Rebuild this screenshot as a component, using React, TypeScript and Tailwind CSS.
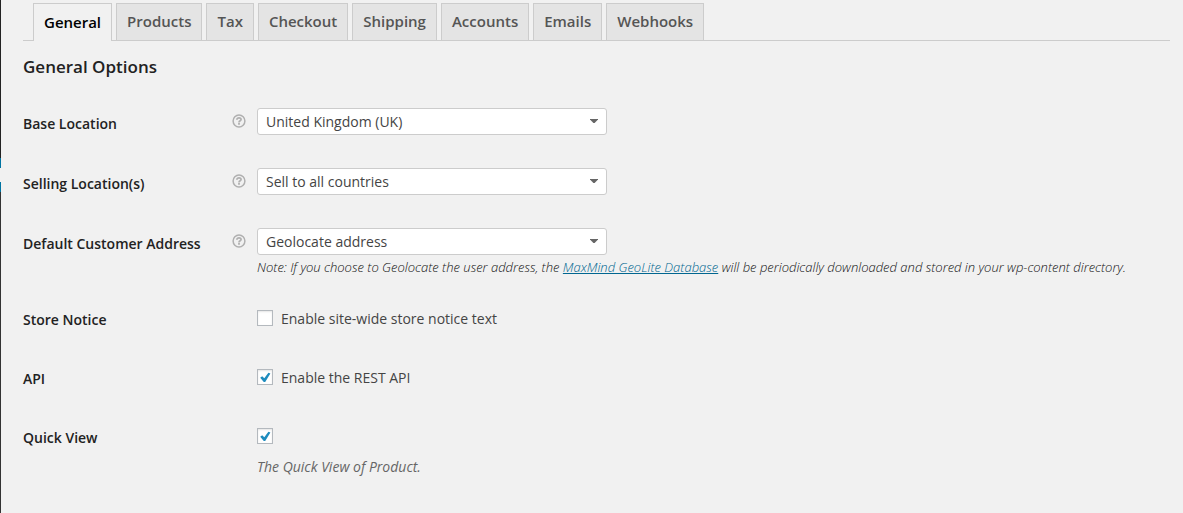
import { ReactNode, useState } from "react";

const tabs = ["General", "Products", "Tax", "Checkout", "Shipping", "Accounts", "Emails", "Webhooks"];

function HelpIcon() {
  return (
    <svg viewBox="0 0 14 14" className="h-3.5 w-3.5" fill="none" stroke="#b0b0b0" aria-hidden="true">
      <circle cx="7" cy="7" r="5.9" strokeWidth="1.5" />
      <path d="M4.9 5.7C4.9 4.5 5.8 3.9 7 3.9s2.1.6 2.1 1.7C9.1 6.9 7 6.8 7 8.4" strokeWidth="1.7" />
      <path d="M7 9.1v1.7" strokeWidth="1.8" />
    </svg>
  );
}

function Row({ id, label, help, children }: { id: string; label: string; help?: boolean; children: ReactNode }) {
  return (
    <div className="grid grid-cols-[209px_25px_1fr] py-[15px]">
      <label htmlFor={id} className="pt-[5px] leading-[22px] font-semibold text-[#222222]">
        {label}
      </label>
      <span className="pt-[6px]">{help && <HelpIcon />}</span>
      <div>{children}</div>
    </div>
  );
}

function Select({ id, options }: { id: string; options: string[] }) {
  return (
    <div className="mb-[3px] grid w-[350px] max-w-full items-center">
      <select
        id={id}
        className="col-start-1 row-start-1 h-[27px] appearance-none rounded-[3px] border border-[#cccccc] bg-white px-2 text-sm text-[#444444]"
      >
        {options.map((o) => (
          <option key={o}>{o}</option>
        ))}
      </select>
      <svg
        viewBox="0 0 8 5"
        className="pointer-events-none col-start-1 row-start-1 mr-[9px] h-[5px] w-2 justify-self-end"
        fill="#666666"
        aria-hidden="true"
      >
        <path d="M0 0h8v.6L4.6 4H3.4L0 .6z" />
      </svg>
    </div>
  );
}

function Checkbox({ id, initial, text }: { id: string; initial: boolean; text?: string }) {
  const [on, setOn] = useState(initial);
  return (
    <div className="mb-0.5 flex h-[27px] items-center gap-2">
      <span className="grid">
        <input
          id={id}
          type="checkbox"
          checked={on}
          onChange={() => setOn(!on)}
          className="col-start-1 row-start-1 h-4 w-4 appearance-none border border-[#b4b9be] bg-white shadow-[inset_0_1px_2px_rgba(0,0,0,0.1)]"
        />
        {on && (
          <svg
            viewBox="0 0 16 16"
            className="pointer-events-none col-start-1 row-start-1 h-4 w-4"
            fill="#1e8cbe"
            aria-hidden="true"
          >
            <path d="M3.2 8.8 5.2 7.3 7.3 9.3 11.4 3.8 13.4 4.6 8.2 13H6.8z" />
          </svg>
        )}
      </span>
      {text && (
        <label htmlFor={id} className="pt-0.5">
          {text}
        </label>
      )}
    </div>
  );
}

export default function App() {
  const [active, setActive] = useState("General");
  return (
    <div className="flex min-h-screen bg-[#f1f1f1] font-['Open_Sans',sans-serif] text-sm text-[#444444]">
      <div className="flex w-px shrink-0 flex-col" aria-hidden="true">
        <div className="h-[158px] bg-[#222222]" />
        <div className="h-[10px] bg-[#0074a2]" />
        <div className="h-[14px]" />
        <div className="h-[10px] bg-[#0074a2]" />
        <div className="grow bg-[#333333]" />
      </div>
      <main className="min-w-0 grow pr-[13px] pl-[22px]">
        <nav className="flex gap-1 border-b border-[#cccccc] px-2.5 pt-[3px]">
          {tabs.map((t) => (
            <button
              key={t}
              type="button"
              onClick={() => setActive(t)}
              className={
                t === active
                  ? "-mb-px h-[38px] border border-b-0 border-[#cccccc] bg-[#f1f1f1] px-2.5 text-[15px] font-semibold text-black"
                  : "h-[37px] border border-b-0 border-[#cccccc] bg-[#e4e4e4] px-2.5 text-[15px] font-semibold text-[#555555]"
              }
            >
              {t}
            </button>
          ))}
        </nav>
        <h3 className="pt-[14px] pb-[14px] text-[17px] leading-6 font-semibold text-[#222222]">General Options</h3>
        <form>
          <Row id="base" label="Base Location" help>
            <Select id="base" options={["United Kingdom (UK)"]} />
          </Row>
          <Row id="selling" label="Selling Location(s)" help>
            <Select id="selling" options={["Sell to all countries"]} />
          </Row>
          <Row id="address" label="Default Customer Address" help>
            <Select id="address" options={["Geolocate address"]} />
            <p className="-mb-0.5 text-[13px] leading-[18px] font-light italic text-[#111111]">
              Note: If you choose to Geolocate the user address, the{" "}
              <a href="#maxmind" className="text-[#006690] underline">
                MaxMind GeoLite Database
              </a>{" "}
              will be periodically downloaded and stored in your wp-content directory.
            </p>
          </Row>
          <Row id="notice" label="Store Notice">
            <Checkbox id="notice" initial={false} text="Enable site-wide store notice text" />
          </Row>
          <Row id="api" label="API">
            <Checkbox id="api" initial text="Enable the REST API" />
          </Row>
          <Row id="quick" label="Quick View">
            <Checkbox id="quick" initial />
            <p className="pt-[5px] leading-[22px] text-[#666666] italic">The Quick View of Product.</p>
          </Row>
        </form>
      </main>
    </div>
  );
}
